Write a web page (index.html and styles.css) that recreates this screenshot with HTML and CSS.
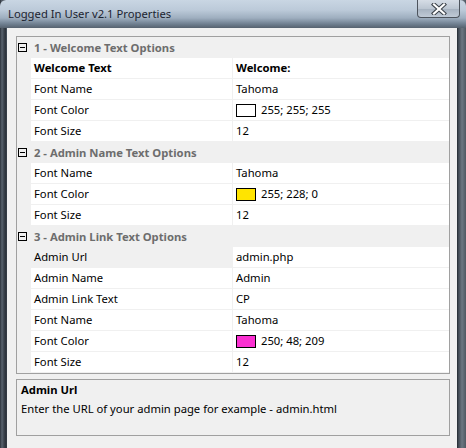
FILE: index.html
```html
<!DOCTYPE html>
<html>
<head>
<meta charset="utf-8">
<link rel="stylesheet" href="styles.css">
</head>
<body>
<div class="window">
  <div class="titlebar">
    <span class="title">Logged In User v2.1 Properties</span>
    <div class="close">
      <svg width="18" height="12" viewBox="0 0 18 12">
        <path d="M4 1.5 L14 10.5 M14 1.5 L4 10.5" stroke="#3a4048" stroke-width="4.2" stroke-linecap="square" fill="none"/>
        <path d="M4 1.5 L14 10.5 M14 1.5 L4 10.5" stroke="#ffffff" stroke-width="2.2" stroke-linecap="square" fill="none"/>
      </svg>
    </div>
  </div>
  <div class="client">
    <div class="grid">
      <div class="cat"><span class="toggle"></span><span class="cat-label">1 - Welcome Text Options</span></div>
      <div class="row bold"><span class="gut"></span><span class="name">Welcome Text</span><span class="val">Welcome:</span></div>
      <div class="row"><span class="gut"></span><span class="name">Font Name</span><span class="val">Tahoma</span></div>
      <div class="row"><span class="gut"></span><span class="name">Font Color</span><span class="val"><span class="sw sw-white"></span>255; 255; 255</span></div>
      <div class="row"><span class="gut"></span><span class="name">Font Size</span><span class="val">12</span></div>
      <div class="cat"><span class="toggle"></span><span class="cat-label">2 - Admin Name Text Options</span></div>
      <div class="row"><span class="gut"></span><span class="name">Font Name</span><span class="val">Tahoma</span></div>
      <div class="row"><span class="gut"></span><span class="name">Font Color</span><span class="val"><span class="sw sw-yellow"></span>255; 228; 0</span></div>
      <div class="row"><span class="gut"></span><span class="name">Font Size</span><span class="val">12</span></div>
      <div class="cat"><span class="toggle"></span><span class="cat-label">3 - Admin Link Text Options</span></div>
      <div class="row selected"><span class="gut"></span><span class="name">Admin Url</span><span class="val">admin.php</span></div>
      <div class="row"><span class="gut"></span><span class="name">Admin Name</span><span class="val">Admin</span></div>
      <div class="row"><span class="gut"></span><span class="name">Admin Link Text</span><span class="val">CP</span></div>
      <div class="row"><span class="gut"></span><span class="name">Font Name</span><span class="val">Tahoma</span></div>
      <div class="row"><span class="gut"></span><span class="name">Font Color</span><span class="val"><span class="sw sw-pink"></span>250; 48; 209</span></div>
      <div class="row"><span class="gut"></span><span class="name">Font Size</span><span class="val">12</span></div>
    </div>
    <div class="desc">
      <div class="desc-title">Admin Url</div>
      <div class="desc-text">Enter the URL of your admin page for example - admin.html</div>
    </div>
  </div>
</div>
</body>
</html>
```
FILE: styles.css
```css
* { box-sizing: border-box; }
html, body { margin: 0; padding: 0; }
body {
  width: 466px;
  height: 448px;
  overflow: hidden;
  font-family: "Noto Sans", "Open Sans", sans-serif;
  font-size: 11.25px;
  color: #000;
}
.window {
  width: 466px;
  height: 448px;
  display: flex;
  flex-direction: column;
  background:
    linear-gradient(90deg, #2b323b 0px, #59636e 2px, #3a424c 4px, #2a3038 6px, transparent 7px),
    linear-gradient(270deg, #4f5862 0px, #6c7782 4px, #3a424c 8px, #1f252c 9px, transparent 9px),
    linear-gradient(180deg, #a9b9ca 0px, #8d9daf 20px, #5e6d7c 28px, #434c57 60px, #3a424c 448px);
}
.titlebar {
  height: 28px;
  flex: none;
  display: flex;
  align-items: flex-start;
  justify-content: space-between;
  padding-left: 8px;
  background: linear-gradient(180deg, #c9d6e3 0px, #bccad9 10px, #9eaebf 18px, #6f7f90 24px, #56626f 28px);
  border-radius: 6px 6px 0 0;
}
.title {
  font-size: 11.25px;
  line-height: 28px;
  color: #1c2430;
}
.close {
  width: 43px;
  height: 18px;
  margin-right: 6px;
  border: 1px solid #4d545d;
  border-top: none;
  border-radius: 0 0 4px 4px;
  background: linear-gradient(180deg, #d6dde6 0%, #bcc6d2 50%, #a5b1bf 51%, #c0cad6 100%);
  display: flex;
  align-items: center;
  justify-content: center;
}
.client {
  flex: 1;
  margin: 0 9px 0 7px;
  background: #f0f0f0;
  padding: 8px 7px 0 9px;
  display: flex;
  flex-direction: column;
}
.grid {
  border: 1px solid #a0a0a0;
  background: #f0f0f0;
  display: flex;
  flex-direction: column;
}
.cat {
  height: 21px;
  display: flex;
  align-items: center;
  background: #f0f0f0;
}
.toggle {
  width: 9px;
  height: 9px;
  margin-left: 1px;
  border: 1px solid #000;
  position: relative;
  flex: none;
}
.toggle::after {
  content: "";
  position: absolute;
  left: 1px;
  top: 3px;
  width: 5px;
  height: 1px;
  background: #000;
}
.cat-label {
  margin-left: 7px;
  font-weight: bold;
  color: #6d6d6d;
}
.row {
  height: 21px;
  display: flex;
}
.gut {
  width: 14px;
  flex: none;
  background: #f0f0f0;
}
.name {
  width: 202px;
  flex: none;
  background: #fff;
  border-bottom: 1px solid #f0f0f0;
  border-right: 1px solid #f0f0f0;
  padding-left: 3px;
  line-height: 20px;
  white-space: nowrap;
}
.val {
  flex: 1;
  background: #fff;
  border-bottom: 1px solid #f0f0f0;
  padding-left: 3px;
  line-height: 20px;
  display: flex;
  align-items: center;
  white-space: nowrap;
}
.row.bold .name, .row.bold .val { font-weight: bold; }
.row.selected .name { background: #f0f0f0; }
.sw {
  width: 20px;
  height: 13px;
  border: 1px solid #000;
  margin-right: 5px;
  flex: none;
}
.sw-white { background: #fff; }
.sw-yellow { background: #ffe400; }
.sw-pink { background: #fa30d1; }
.desc {
  margin-top: 5px;
  height: 57px;
  border: 1px solid #a0a0a0;
  padding: 1px 0 0 4px;
}
.desc-title {
  font-weight: bold;
  line-height: 18px;
}
.desc-text {
  line-height: 19px;
}
```
